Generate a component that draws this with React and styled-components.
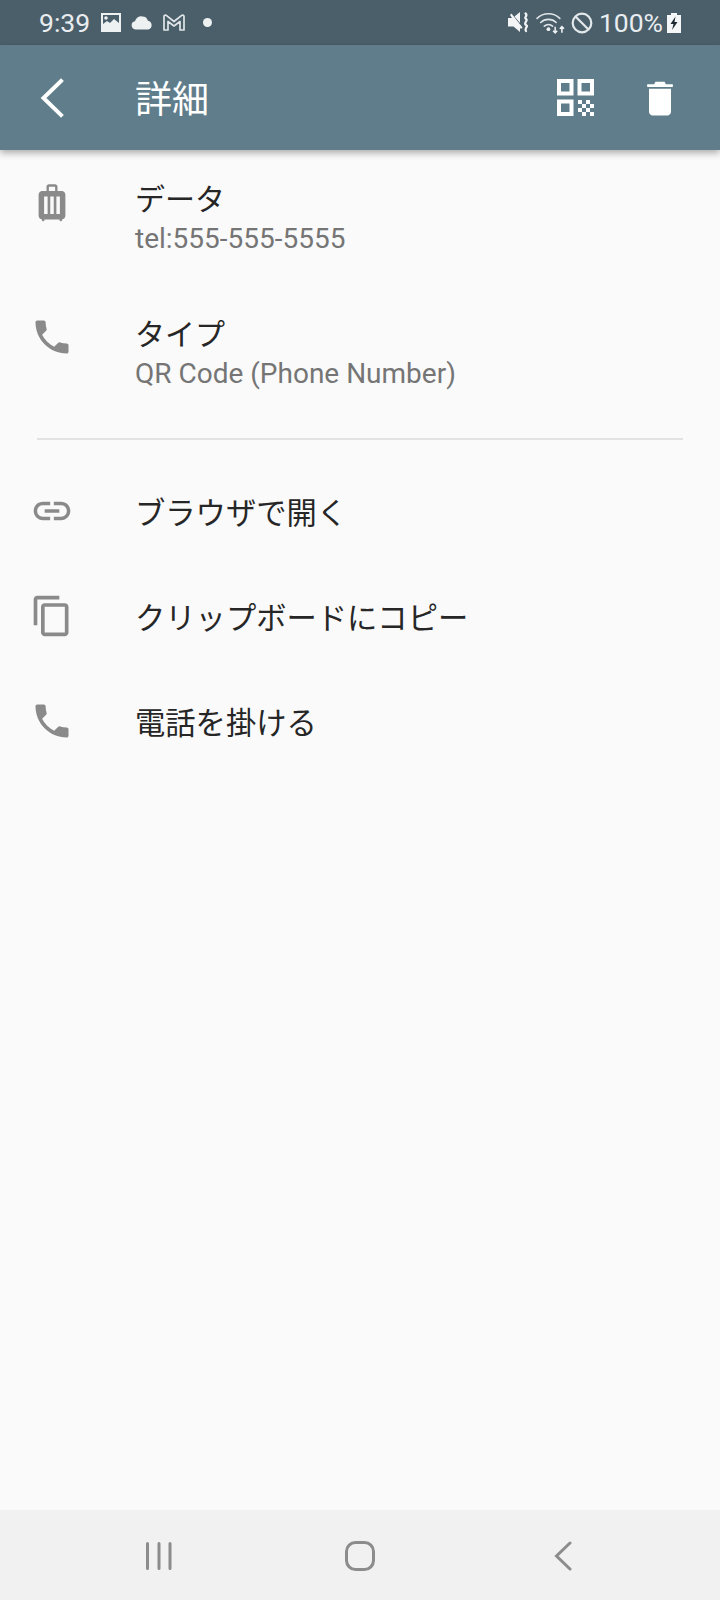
import styled, { createGlobalStyle } from "styled-components";

const GlobalStyle = createGlobalStyle`
  html, body {
    margin: 0;
    padding: 0;
    background: #fafafa;
  }
  * {
    box-sizing: border-box;
  }
`;

const Screen = styled.div`
  width: 720px;
  height: 1600px;
  display: flex;
  flex-direction: column;
  background: #fafafa;
  font-family: Roboto, "Noto Sans CJK JP", sans-serif;
  overflow: hidden;
`;

const StatusBar = styled.div`
  height: 45px;
  flex: none;
  display: flex;
  align-items: center;
  padding: 0 39px 0 39px;
  background: #4b5f6b;
  color: #e9edef;
  font-size: 26.5px;
`;
const StatusGroup = styled.div`
  display: flex;
  align-items: center;
  gap: ${(props) => props.$gap || 8}px;
`;
const StatusSpacer = styled.div`
  flex: 1;
`;
const StatusText = styled.span`
  line-height: 45px;
  margin-right: ${(props) => props.$after || 0}px;
`;
const Dot = styled.span`
  width: 9px;
  height: 9px;
  margin-left: 8px;
  border-radius: 50%;
  background: #eef1f2;
`;

const AppBar = styled.header`
  position: relative;
  height: 105px;
  flex: none;
  display: flex;
  align-items: center;
  background: #607d8b;
  box-shadow: 0 3px 7px rgba(0, 0, 0, 0.32);
`;
const BackButton = styled.div`
  width: 135px;
  height: 105px;
  flex: none;
  display: flex;
  align-items: center;
  padding-left: 39px;
`;
const Title = styled.h1`
  flex: 1;
  margin: 0;
  padding-top: 7px;
  color: #fff;
  font-size: 37px;
  font-weight: 400;
  line-height: 98px;
`;
const Action = styled.div`
  display: flex;
  align-items: center;
  margin-right: ${(props) => props.$right}px;
`;

const Content = styled.main`
  flex: 1;
`;
const DetailRow = styled.div`
  height: 135px;
  display: flex;
  align-items: flex-start;
  padding: 30px 0 0 30px;
`;
const IconSlot = styled.div`
  width: 44px;
  height: 44px;
  flex: none;
  margin-right: 61px;
  display: flex;
  align-items: center;
  justify-content: center;
  color: #8a8a8a;
`;
const DetailText = styled.div`
  display: flex;
  flex-direction: column;
`;
const DetailLabel = styled.div`
  color: #262626;
  font-size: 30px;
  line-height: 39px;
`;
const DetailValue = styled.div`
  color: #757575;
  font-size: 28px;
  line-height: 39px;
`;
const Divider = styled.hr`
  height: 2px;
  margin: 18px 37px 18px 37px;
  border: 0;
  background: #e2e2e2;
`;
const ActionRow = styled.div`
  height: 105px;
  display: flex;
  align-items: center;
  padding-left: 30px;
  color: #262626;
  font-size: 30.3px;
`;

const NavBar = styled.nav`
  height: 90px;
  flex: none;
  display: flex;
  justify-content: center;
  background: #f1f1f1;
`;
const NavSlot = styled.div`
  width: 201px;
  display: flex;
  align-items: center;
  justify-content: center;
  padding-top: 1px;
  padding-left: ${(props) => props.$left || 0}px;
`;

const PHONE =
  "M6.62 10.79c1.44 2.83 3.76 5.14 6.59 6.59l2.2-2.2c.27-.27.67-.36 1.02-.24 1.12.37 2.33.57 3.57.57.55 0 1 .45 1 1V20c0 .55-.45 1-1 1-9.39 0-17-7.61-17-17 0-.55.45-1 1-1h3.5c.55 0 1 .45 1 1 0 1.25.2 2.45.57 3.57.11.35.03.74-.25 1.02l-2.2 2.2z";
const LINK =
  "M3.9 12c0-1.71 1.39-3.1 3.1-3.1h4V7H7c-2.76 0-5 2.24-5 5s2.24 5 5 5h4v-1.9H7c-1.71 0-3.1-1.39-3.1-3.1zM8 13h8v-2H8v2zm9-6h-4v1.9h4c1.71 0 3.1 1.39 3.1 3.1s-1.39 3.1-3.1 3.1h-4V17h4c2.76 0 5-2.24 5-5s-2.24-5-5-5z";
const COPY =
  "M16 1H4c-1.1 0-2 .9-2 2v14h2V3h12V1zm3 4H8c-1.1 0-2 .9-2 2v14c0 1.1.9 2 2 2h11c1.1 0 2-.9 2-2V7c0-1.1-.9-2-2-2zm0 16H8V7h11v14z";
const LUGGAGE =
  "M9 3.600C9 2.900 9.600 2.300 10.300 2.300h3.400c.7 0 1.300.6 1.300 1.300V6h2.300c1.100 0 2 .9 2 2v11.500c0 1-.8 1.900-1.800 2v.3a.7.7 0 0 1-1.400 0v-.3H7.900v.3a.7.7 0 0 1-1.400 0v-.3c-1-.1-1.800-1-1.800-2V8c0-1.100.9-2 2-2H9V3.600zM10.300 6h3.400V3.700h-3.400V6zM7.700 9v9.500h1.900V9H7.700zm3.350 0v9.500h1.900V9h-1.900zm3.350 0v9.500h1.900V9h-1.900z";

function MaterialIcon({ d }) {
  return (
    <svg width="44" height="44" viewBox="0 0 24 24" fill="currentColor">
      <path d={d} />
    </svg>
  );
}

function GalleryIcon() {
  return (
    <svg width="20" height="20" viewBox="0 0 20 20">
      <path
        fill="#eef1f2"
        fillRule="evenodd"
        d="M0 0h20v19H0zM2 2v9l4-3 3 2 4-4 5 4V2zM5 3.200a1.800 1.800 0 1 1 0 3.600 1.800 1.800 0 0 1 0-3.600z"
      />
    </svg>
  );
}

function CloudIcon() {
  return (
    <svg width="22" height="14" viewBox="0 0 22 14">
      <path
        fill="#eef1f2"
        d="M4.500 13.500A4.200 4.200 0 0 1 4 5.200 6.300 6.300 0 0 1 11.500.500c2.700 0 4.700 1.600 5.400 4.200a4.500 4.500 0 0 1 .3 8.800z"
      />
    </svg>
  );
}

function MailIcon() {
  return (
    <svg width="22" height="17" viewBox="0 0 22 17" fill="none">
      <path
        stroke="#dfe5e8"
        strokeWidth="1.700"
        strokeLinejoin="round"
        d="M1 2.500C1 1.300 2.300.6 3.300 1.400L11 7.500l7.700-6.100c1-.8 2.300-.1 2.300 1.100V16h-4V7.500L11 12 5 7.500V16H1z"
      />
    </svg>
  );
}

function MuteIcon() {
  return (
    <svg width="22" height="21" viewBox="0 0 22 21" fill="none">
      <path fill="#f2f4f5" d="M0 6h4L2 3l1.500-1.500 11 14L13 17l-1-1.200V20l-6.500-5.500H0zM6.500 4.500 12 0v11z" />
      <path
        stroke="#f2f4f5"
        strokeWidth="2.200"
        strokeLinecap="round"
        d="M17.500 1.500c3 2-2 4 .5 5.500s-3 4 0 6c3 1.500-2 3 0 6"
      />
    </svg>
  );
}

function WifiIcon() {
  return (
    <svg width="29" height="23" viewBox="0 0 28 22" fill="none">
      <g stroke="#dfe5e8" strokeWidth="1.500" strokeLinecap="round">
        <path d="M1 7C7 1 17 1 23 7" />
        <path d="M4.500 11C8.500 7 15.500 7 19.500 11" />
        <path d="M8 14.500c2.300-2 5.700-2 8 0" />
      </g>
      <circle cx="12" cy="17.500" r="1.800" fill="#eef1f2" />
      <path
        stroke="#eef1f2"
        strokeWidth="1.500"
        d="M18.500 15v6M16.500 19l2 2 2-2M25 21v-6M23 17l2-2 2 2"
      />
    </svg>
  );
}

function BlockIcon() {
  return (
    <svg width="22" height="22" viewBox="0 0 22 22" fill="none">
      <circle cx="11" cy="11" r="9.300" stroke="#e3e8ea" strokeWidth="2.200" />
      <path d="M4.500 4.500l13 13" stroke="#e3e8ea" strokeWidth="2.200" />
    </svg>
  );
}

function BatteryIcon() {
  return (
    <svg width="14" height="20" viewBox="0 0 14 20">
      <path fill="#f4f6f7" d="M4 0h6v2h4v18H0V2h4z" />
      <path fill="#1d2a31" d="M8.500 3.500 3.500 11h3l-1.500 6 5.500-8H7.500z" />
    </svg>
  );
}

function ChevronBack() {
  return (
    <svg width="26" height="40" viewBox="0 0 26 40" fill="none">
      <path d="M22 3 4.500 20 22 37" stroke="#fff" strokeWidth="4" strokeLinecap="square" />
    </svg>
  );
}

function QrIcon() {
  return (
    <svg width="37" height="37" viewBox="0 0 37 37">
      <path
        fill="#fff"
        fillRule="evenodd"
        d="M0 0h16.500v16.500H0zM4 4v8.500h8.500V4zM20.500 0H37v16.500H20.500zM24.500 4v8.500H33V4zM0 20.500h16.500V37H0zM4 24.500V33h8.500v-8.500z"
      />
      <path
        fill="#fff"
        d="M21 21h4v4h-4zM29 21h4v4h-4zM25 25h4v4h-4zM33 25h4v4h-4zM21 29h4v4h-4zM29 29h4v4h-4zM25 33h4v4h-4zM33 33h4v4h-4z"
      />
    </svg>
  );
}

function TrashIcon() {
  return (
    <svg width="44" height="44" viewBox="0 0 24 24" fill="#fff">
      <path d="M6 19.500c0 1.100.9 2 2 2h8c1.100 0 2-.9 2-2V7H6zM19 4.500h-3.800L14.500 3.200h-5L8.800 4.500H5V6h14z" />
    </svg>
  );
}

function NavLines() {
  return (
    <svg width="28" height="28" viewBox="0 0 28 28">
      <g stroke="#8c8c8c" strokeWidth="3" strokeLinecap="round">
        <path d="M2.500 1.500v25M14 1.500v25M25 1.500v25" />
      </g>
    </svg>
  );
}

function NavHome() {
  return (
    <svg width="32" height="32" viewBox="0 0 32 32" fill="none">
      <rect x="2.500" y="2.500" width="27" height="27" rx="9" stroke="#8c8c8c" strokeWidth="3" />
    </svg>
  );
}

function NavBack() {
  return (
    <svg width="18" height="30" viewBox="0 0 18 30" fill="none">
      <path d="M16 2 2.500 15 16 28" stroke="#8c8c8c" strokeWidth="3" strokeLinecap="round" />
    </svg>
  );
}

const details = [
  { label: "データ", value: "tel:555-555-5555", icon: LUGGAGE },
  { label: "タイプ", value: "QR Code (Phone Number)", icon: PHONE },
];

const actions = [
  { label: "ブラウザで開く", icon: LINK },
  { label: "クリップボードにコピー", icon: COPY },
  { label: "電話を掛ける", icon: PHONE },
];

export default function App() {
  return (
    <>
      <GlobalStyle />
      <Screen>
        <StatusBar>
          <StatusGroup $gap={10}>
            <StatusText $after={1}>9:39</StatusText>
            <GalleryIcon />
            <CloudIcon />
            <MailIcon />
            <Dot />
          </StatusGroup>
          <StatusSpacer />
          <StatusGroup $gap={6}>
            <MuteIcon />
            <WifiIcon />
            <BlockIcon />
            <StatusText $after={-2}>100%</StatusText>
            <BatteryIcon />
          </StatusGroup>
        </StatusBar>
        <AppBar>
          <BackButton>
            <ChevronBack />
          </BackButton>
          <Title>詳細</Title>
          <Action $right={44}>
            <QrIcon />
          </Action>
          <Action $right={38}>
            <TrashIcon />
          </Action>
        </AppBar>
        <Content>
          {details.map((item) => (
            <DetailRow key={item.label}>
              <IconSlot>
                <MaterialIcon d={item.icon} />
              </IconSlot>
              <DetailText>
                <DetailLabel>{item.label}</DetailLabel>
                <DetailValue>{item.value}</DetailValue>
              </DetailText>
            </DetailRow>
          ))}
          <Divider />
          {actions.map((item) => (
            <ActionRow key={item.label}>
              <IconSlot>
                <MaterialIcon d={item.icon} />
              </IconSlot>
              {item.label}
            </ActionRow>
          ))}
        </Content>
        <NavBar>
          <NavSlot>
            <NavLines />
          </NavSlot>
          <NavSlot>
            <NavHome />
          </NavSlot>
          <NavSlot $left={3}>
            <NavBack />
          </NavSlot>
        </NavBar>
      </Screen>
    </>
  );
}
